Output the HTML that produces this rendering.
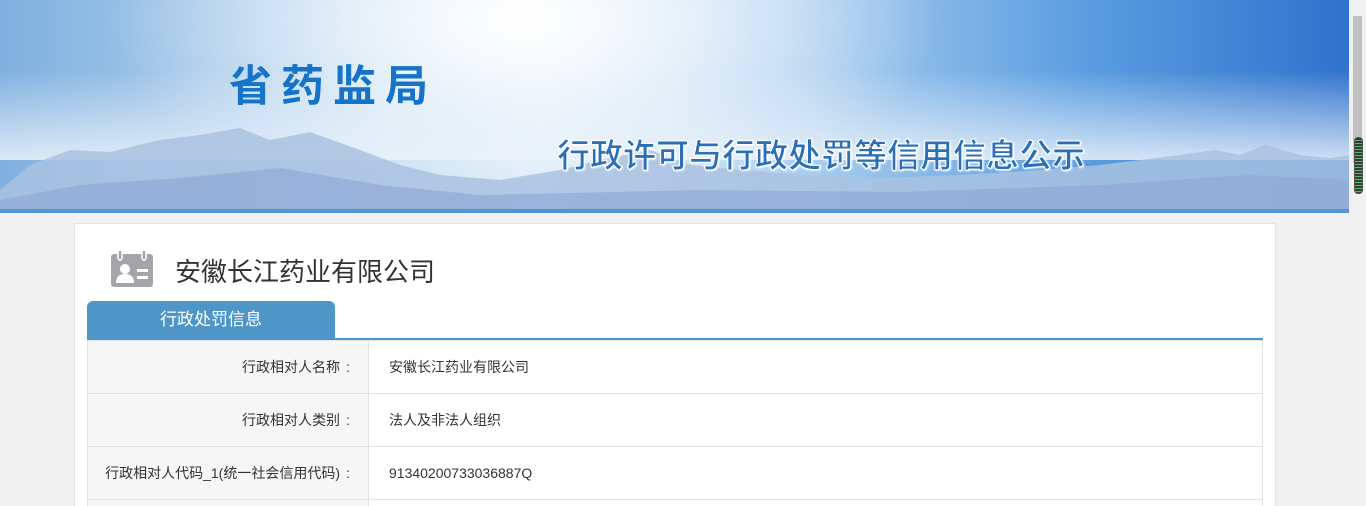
<!DOCTYPE html>
<html><head><meta charset="utf-8"><style>
*{margin:0;padding:0;box-sizing:border-box}
html,body{width:1366px;height:506px;overflow:hidden}
body{background:#f1f1f1;font-family:"Liberation Sans","Noto Sans CJK SC",sans-serif;position:relative}
.banner{position:absolute;left:0;top:0;width:1349px;height:213px;overflow:hidden;
background:radial-gradient(ellipse 420px 200px at 520px 20px,#ffffff 0%,rgba(255,255,255,.6) 40%,rgba(255,255,255,0) 100%),
linear-gradient(90deg,#7fb0df 0%,#b9d6ef 25%,#dbeaf7 40%,#a9cdee 60%,#5b9ee0 80%,#2f72cd 100%);}
.banner .fade{position:absolute;left:0;right:0;top:70px;height:90px;background:linear-gradient(180deg,rgba(255,255,255,0),rgba(235,242,250,.85))}
.banner svg{position:absolute;left:0;top:0}
.bline{position:absolute;left:0;top:209px;width:1349px;height:4px;background:#4f97d0}
.t1{position:absolute;left:229px;top:52px;font-size:43px;font-weight:bold;color:#1573c8;letter-spacing:9px;font-family:"Noto Sans CJK SC",sans-serif}
.t2{position:absolute;left:557px;top:129px;font-size:33px;font-weight:bold;color:#2b6fb8;letter-spacing:0;font-family:"Noto Sans CJK SC",sans-serif;-webkit-text-stroke:1px #fff;text-shadow:0 0 2px #fff,1px 1px 2px #fff;white-space:nowrap}
.sb{position:absolute;left:1349px;top:0;width:17px;height:506px;background:#f0f0f0}
.sb .th{position:absolute;left:4px;top:16px;width:9px;height:147px;background:#c1c1c1}
.sb .g{position:absolute;left:5px;top:137px;width:9px;height:57px;border-radius:4px;background:repeating-linear-gradient(180deg,#3a3a3a 0 2px,#4cc05a 2px 3px);border:1px solid #555}
.card{position:absolute;left:74px;top:223px;width:1202px;height:283px;background:#fff;border:1px solid #e3e3e3;border-bottom:none}
.icon{position:absolute;left:111px;top:250px}
.name{position:absolute;left:175px;top:252px;font-size:26px;color:#333}
.tab{position:absolute;left:87px;top:301px;width:248px;height:38px;background:#4f96c8;border-radius:6px 6px 0 0;color:#fff;font-size:17px;text-align:center;line-height:38px}
.tline{position:absolute;left:87px;top:338px;width:1176px;height:2px;background:#4f96c8}
.tw{position:absolute;left:87px;top:340px;width:1176px;height:166px;overflow:hidden}
table{width:1176px;border-collapse:collapse;font-size:14px;color:#333}
td{height:53px;border:1px solid #e3e3e3}
td.l{width:281px;background:#f6f6f6;text-align:right;padding-right:12px}
td.r{padding-left:20px}
.c{display:inline-block;width:16px;text-align:center}
</style></head><body>
<div class="banner">
<div class="fade"></div>
<svg width="1349" height="213">
<path d="M0,190 L30,165 L70,150 L110,152 L160,140 L200,135 L240,128 L270,140 L310,132 L360,150 L400,165 L440,175 L500,180 L560,170 L600,160 L650,150 L690,165 L740,170 L800,175 L880,178 L960,175 L1040,170 L1100,165 L1140,160 L1180,155 L1215,150 L1240,155 L1265,145 L1300,155 L1330,158 L1349,155 L1349,213 L0,213Z" fill="#a9c2e0" opacity=".85"/>
<path d="M0,200 L80,185 L180,178 L280,168 L380,185 L480,195 L700,190 L900,192 L1100,185 L1250,175 L1349,180 L1349,213 L0,213Z" fill="#8fa9d6" opacity=".7"/>
</svg>
<div class="t1">省药监局</div>
<div class="t2">行政许可与行政处罚等信用信息公示</div>
</div>
<div class="bline"></div>
<div class="sb"><div class="th"></div><div class="g"></div></div>
<div class="card"></div>
<svg class="icon" width="43" height="38" viewBox="0 0 43 38">
<rect x="0" y="4" width="42" height="33" rx="3" fill="#a5a5a9"/>
<rect x="7" y="0" width="4" height="10" rx="2" fill="#a5a5a9" stroke="#fff" stroke-width="1.5"/>
<rect x="31" y="0" width="4" height="10" rx="2" fill="#a5a5a9" stroke="#fff" stroke-width="1.5"/>
<circle cx="14" cy="19" r="5" fill="#fff"/>
<path d="M5,33 Q5,24 14,24 Q23,24 23,33Z" fill="#fff"/>
<rect x="26" y="19" width="11" height="3" fill="#fff"/>
<rect x="26" y="26" width="11" height="3" fill="#fff"/>
</svg>
<div class="name">安徽长江药业有限公司</div>
<div class="tab">行政处罚信息</div>
<div class="tline"></div>
<div class="tw"><table>
<tr><td class="l">行政相对人名称<span class="c">:</span></td><td class="r">安徽长江药业有限公司</td></tr>
<tr><td class="l">行政相对人类别<span class="c">:</span></td><td class="r">法人及非法人组织</td></tr>
<tr><td class="l">行政相对人代码_1(统一社会信用代码)<span class="c">:</span></td><td class="r">91340200733036887Q</td></tr>
<tr><td class="l"></td><td class="r"></td></tr>
</table></div>
</body></html>
